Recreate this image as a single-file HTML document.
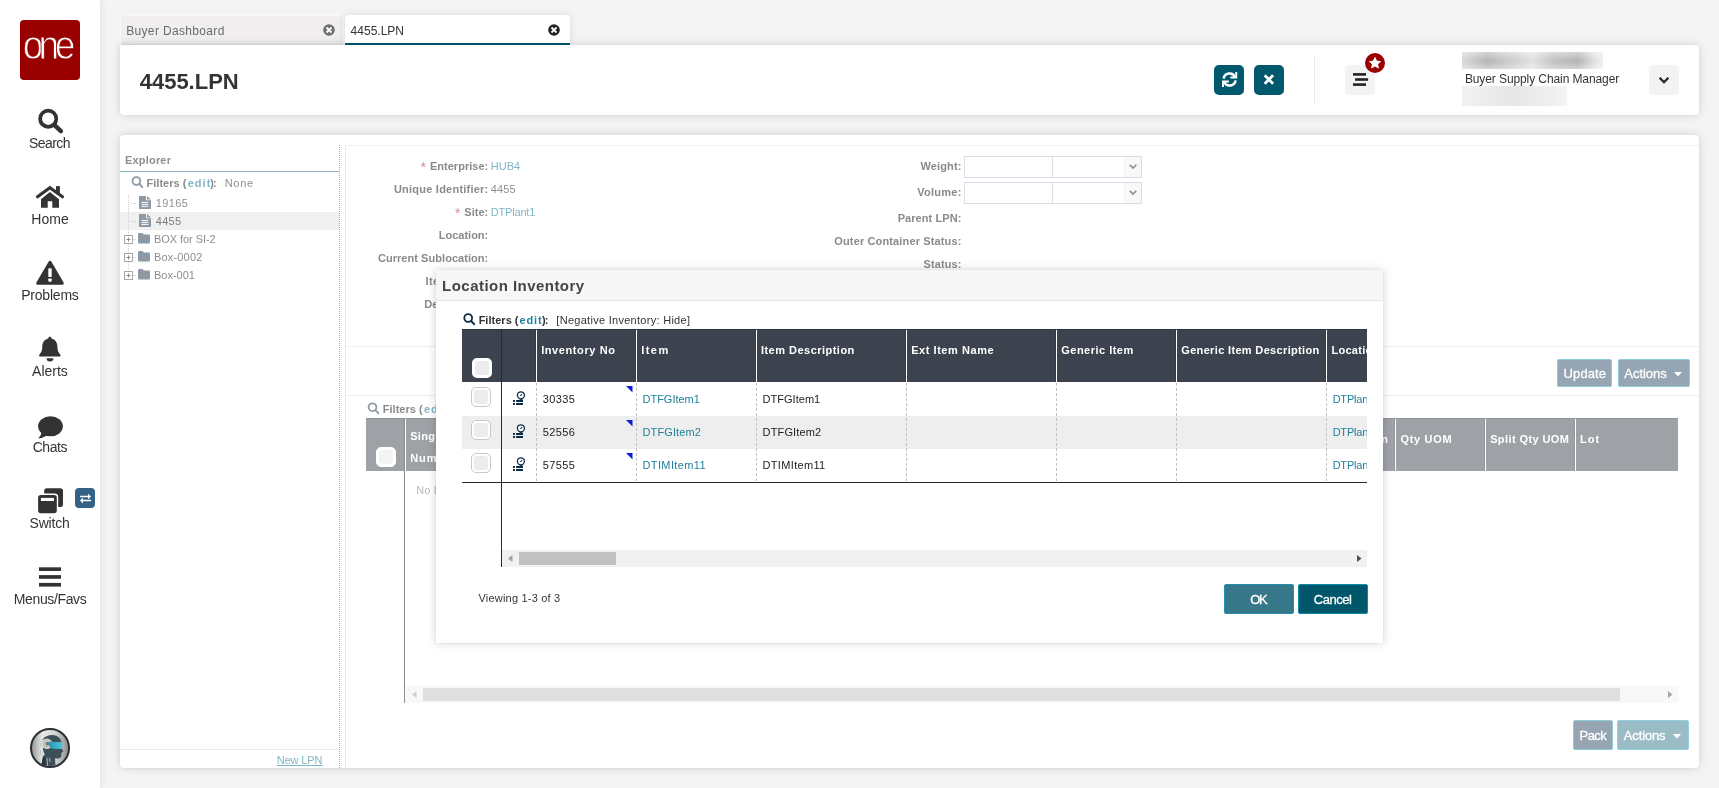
<!DOCTYPE html>
<html lang="en">
<head>
<meta charset="utf-8">
<title>4455.LPN</title>
<style>
*{box-sizing:border-box;margin:0;padding:0}
html,body{width:1719px;height:788px;overflow:hidden}
body{background:#f4f4f4;font-family:"Liberation Sans",sans-serif;font-size:11px;color:#333;position:relative}
.abs{position:absolute}
.t{position:absolute;white-space:nowrap;line-height:1}
a{text-decoration:none}
svg{position:absolute;overflow:visible}
#side{position:absolute;left:0;top:0;width:100px;height:788px;background:#fff;box-shadow:0 0 8px rgba(40,20,20,.11)}
#logo{position:absolute;left:20px;top:20px;width:60px;height:60px;background:#990000;border-radius:4px}
.panel{position:absolute;background:#fff;box-shadow:0 0 10px rgba(30,10,10,.15),0 0 2px rgba(30,10,10,.06)}
.hbtn{position:absolute;top:65px;width:30px;height:30px;border-radius:5px}
.cb{position:absolute;width:20px;height:20px;border-radius:5px;background:#fff;border:1px solid #c9c9c9}
.cb i{position:absolute;left:2px;top:2px;right:2px;bottom:2px;border-radius:3px;background:#ececec}
.btn{position:absolute;border-radius:2px;border:1px solid}
.vline{position:absolute;width:1px}
.hline{position:absolute;height:1px}
</style>
</head>
<body>
<div id="root" style="position:absolute;left:0;top:0;width:1719px;height:788px;will-change:transform;transform:translateZ(0)">

<!-- ============ SIDEBAR ============ -->
<div id="side">
<div id="logo"><svg style="left:0;top:0" width="60" height="60" viewBox="0 0 60 60"><text transform="scale(.93,1)" x="2.9 19.9 37.4" y="39.4" font-family="Liberation Sans, sans-serif" font-size="40" fill="#fff" stroke="#990000" stroke-width="0.9">one</text></svg></div>
<svg style="left:36px;top:106px" width="30" height="30" viewBox="36 106 30 30"><circle cx="48.2" cy="118.7" r="8.1" fill="none" stroke="#333" stroke-width="3.75"/><path d="M54.8 125.3 L60.9 131.2" stroke="#333" stroke-width="4.4" stroke-linecap="round"/></svg>
<svg style="left:34px;top:184px" width="32" height="26" viewBox="34 184 32 26"><path d="M37.500 196.800 L49.900 187.700 L62.500 196.800" fill="none" stroke="#333" stroke-width="3.100" stroke-linecap="round" stroke-linejoin="miter"/><rect x="56" y="186.100" width="3.900" height="8" fill="#333"/><path d="M41 199.200 L49.900 191.900 L59 199.200 V207.800 H52.300 V201.300 H47.700 V207.800 H41 Z" fill="#333"/></svg>
<svg style="left:34px;top:258px" width="32" height="30" viewBox="34 258 32 30"><path d="M50 262.2 L62.3 283.3 H37.7 Z" fill="#333" stroke="#333" stroke-width="3" stroke-linejoin="round"/><rect x="48.3" y="268.2" width="3.4" height="8.8" rx="0.8" fill="#fff"/><rect x="48.3" y="278.4" width="3.4" height="3.3" rx="0.9" fill="#fff"/></svg>
<svg style="left:36px;top:334px" width="28" height="30" viewBox="36 334 28 30"><path d="M50 336.800 c.8 0 1.400 .6 1.400 1.400 v.2 c3.7 .8 6 4 6 7.900 c0 4.600 1.300 6.600 2.800 8.100 c.9 .9 .3 2.200 -.9 2.200 H40.400 c-1.200 0 -1.800 -1.300 -.9 -2.200 c1.500 -1.500 2.800 -3.500 2.800 -8.100 c0 -3.900 2.300 -7.100 6 -7.900 v-.2 c0 -.8 .6 -1.400 1.400 -1.400 z" fill="#333"/><path d="M46.600 358.300 h6.800 a3.400 3.300 0 0 1 -6.800 0 z" fill="#333"/></svg>
<svg style="left:36px;top:414px" width="30" height="28" viewBox="36 414 30 28"><ellipse cx="50.500" cy="426.300" rx="12.400" ry="10.050" fill="#333"/><path d="M41.5 431.5 c0 3 -1.500 5.300 -3.500 6.800 c3.600 .3 6.800 -1 9 -3.200 z" fill="#333"/></svg>
<svg style="left:36px;top:486px" width="30" height="30" viewBox="36 486 30 30"><rect x="44.200" y="488.300" width="18.800" height="18.800" rx="2.800" fill="#333"/><rect x="36.700" y="493.600" width="21.500" height="21" rx="3.600" fill="#fff"/><rect x="38.100" y="495" width="18.700" height="18.300" rx="2.700" fill="#333"/><rect x="40.900" y="497.900" width="13" height="3.100" fill="#fff"/></svg>
<div class="abs" style="left:75px;top:488px;width:20px;height:20px;border-radius:4px;background:#356185"><svg style="left:0;top:0" width="20" height="20" viewBox="0 0 20 20"><path d="M5.100 7.750 H13 V5.700 L16 8.500 L13 11.300 V9.250 H5.100 Z M16 11.850 H8 V9.800 L5 12.600 L8 15.400 V13.350 H16 Z" fill="#fff"/></svg></div>
<svg style="left:36px;top:564px" width="28" height="26" viewBox="36 564 28 26"><rect x="39" y="567.300" width="22" height="3.700" fill="#333"/><rect x="39" y="575.100" width="22" height="3.700" fill="#333"/><rect x="39" y="582.900" width="22" height="3.700" fill="#333"/></svg>
<span class="t" style="left:28.96px;top:136px;font-size:14px;color:#333;letter-spacing:-0.553px;">Search</span>
<span class="t" style="left:31.16px;top:212px;font-size:14px;color:#333;letter-spacing:0.117px;">Home</span>
<span class="t" style="left:21.16px;top:288px;font-size:14px;color:#333;letter-spacing:-0.204px;">Problems</span>
<span class="t" style="left:32.06px;top:364px;font-size:14px;color:#333;">Alerts</span>
<span class="t" style="left:32.66px;top:440px;font-size:14px;color:#333;letter-spacing:-0.446px;">Chats</span>
<span class="t" style="left:29.56px;top:516px;font-size:14px;color:#333;letter-spacing:-0.191px;">Switch</span>
<span class="t" style="left:13.76px;top:592px;font-size:14px;color:#333;letter-spacing:-0.360px;">Menus/Favs</span>
<svg style="left:29px;top:727px" width="42" height="42" viewBox="0 0 42 42">
<defs><linearGradient id="avg" x1="0" y1="0" x2="1" y2="0"><stop offset="0" stop-color="#8f8f8f"/><stop offset=".3" stop-color="#e9e9e9"/><stop offset=".65" stop-color="#d4d4d4"/><stop offset="1" stop-color="#8a8a8a"/></linearGradient>
<linearGradient id="avv" x1="0" y1="0" x2="1" y2="0"><stop offset="0" stop-color="#2596b4"/><stop offset="1" stop-color="#4fc3d8"/></linearGradient>
<clipPath id="avc"><circle cx="21" cy="21" r="18"/></clipPath></defs>
<circle cx="21" cy="21" r="19" fill="url(#avg)" stroke="#2b3033" stroke-width="2"/>
<g clip-path="url(#avc)">
<path d="M12.300 39 L14 29.500 C10.500 26.500 9.800 18 13.500 12.500 C17 7.300 26.500 6.300 30.500 11 C33 14 33.200 18 32.800 21.500 L34.300 24.600 L32.600 25.600 L32.200 29.500 C31 31.600 28.500 32 26 31.200 L26.600 40 C22 41 16.500 41 12.300 39 Z" fill="#3d5059"/>
<path d="M13.500 12.500 C9.800 18 10.500 26.500 14 29.500 L15.800 27.400 C13.200 23.400 13.200 17 16 13 Z" fill="#dde3e5"/>
<path d="M14 29.500 L12.300 39 L17 40.300 L16.400 29.800 Z" fill="#27353d"/>
<path d="M17.800 30.500 L18.800 40 M20.600 30.800 L20.900 35" stroke="#c9d1d4" stroke-width=".8"/>
<circle cx="17.900" cy="16.800" r="5.300" fill="#d3dadd"/>
<circle cx="17.900" cy="16.800" r="3.500" fill="none" stroke="#c0a05a" stroke-width=".8"/>
<circle cx="18.300" cy="16.800" r="2" fill="#6d7f86"/>
<path d="M19.600 14.700 L32.800 15 C33.700 17 33.700 20 32.800 22.100 L23.400 21.700 C20.800 20.700 19.300 18 19.600 14.700 Z" fill="url(#avv)"/>
</g>
</svg>
</div>

<!-- ============ TABS + HEADER ============ -->
<div class="abs" style="left:120px;top:15px;width:224px;height:30px;background:#f0eeee;border-radius:4px 4px 0 0;border:1px solid #f9f9f9;border-bottom:0;box-shadow:inset 0 -4px 4px -3px rgba(40,20,20,.09)"></div>
<div class="abs" style="left:345px;top:15px;width:225px;height:30px;background:#fff;border-radius:4px 4px 0 0;border-bottom:2px solid #005068;z-index:2;box-shadow:0 0 8px rgba(30,10,10,.11);clip-path:inset(-10px -10px 0 -10px)"></div>
<div class="panel" style="left:120px;top:45px;width:1579px;height:70px;border-radius:0 4px 4px 4px"></div>
<span class="t" style="left:126.18px;top:25px;font-size:12px;color:#6b6b6b;letter-spacing:0.340px;z-index:3;">Buyer Dashboard</span>
<span class="t" style="left:350.58px;top:25px;font-size:12px;color:#333;letter-spacing:0.012px;z-index:3;">4455.LPN</span>
<svg style="left:321.8px;top:23px;z-index:3" width="14" height="14" viewBox="-7 -7 14 14"><circle r="5.800" fill="#6e6e6e"/><path d="M-2.500 -2.500 L2.500 2.500 M2.500 -2.500 L-2.500 2.500" stroke="#fff" stroke-width="1.800" stroke-linecap="butt"/></svg>
<svg style="left:546.8px;top:23px;z-index:3" width="14" height="14" viewBox="-7 -7 14 14"><circle r="5.800" fill="#222"/><path d="M-2.500 -2.500 L2.500 2.500 M2.500 -2.500 L-2.500 2.500" stroke="#fff" stroke-width="1.800" stroke-linecap="butt"/></svg>
<span class="t" style="left:139.68px;top:71px;font-size:22px;color:#333;font-weight:bold;">4455.LPN</span>
<div class="hbtn" style="left:1214px;background:#00586d"><svg style="left:0;top:0" width="30" height="30" viewBox="0 0 30 30"><g fill="none" stroke="#fff" stroke-width="2.500"><path d="M9.610 13.660 A6.050 6.050 0 0 1 20.990 11.750"/><path d="M21.590 15.340 A6.050 6.050 0 0 1 10.210 17.250"/></g><path d="M22.250 6.900 V12.550 H16.300 M8.950 22.100 V16.450 H14.900" fill="none" stroke="#fff" stroke-width="1.900"/></svg></div>
<div class="hbtn" style="left:1254px;background:#00586d"><svg style="left:0;top:0" width="30" height="30" viewBox="0 0 30 30"><path d="M10.700 10.300 L19.100 18.700 M19.100 10.300 L10.700 18.700" stroke="#fff" stroke-width="2.700" stroke-linecap="butt"/></svg></div>
<div class="vline" style="left:1314px;top:55px;height:50px;background:#ececec"></div>
<div class="hbtn" style="left:1345px;background:#f3f3f3"><svg style="left:0;top:0" width="30" height="30" viewBox="0 0 30 30"><rect x="8" y="8.100" width="13" height="2.600" fill="#222"/><rect x="10.100" y="13.200" width="13" height="2.600" fill="#222"/><rect x="8" y="18.300" width="13" height="2.600" fill="#222"/></svg></div>
<svg style="left:1364px;top:52px" width="22" height="22" viewBox="-11 -11 22 22"><circle r="10" fill="#990000"/><path d="M0 -5.600 L1.650 -1.900 L5.600 -1.500 L2.650 1.150 L3.450 5.100 L0 3.100 L-3.450 5.100 L-2.650 1.150 L-5.600 -1.500 L-1.650 -1.900 Z" fill="#fff" stroke="#fff" stroke-width=".8" stroke-linejoin="round"/></svg>
<div class="abs" style="left:1462px;top:52px;width:141px;height:17px;background:linear-gradient(90deg,#d9d9d9 0%,#b9b9b9 18%,#cfcfcf 35%,#e2e2e2 50%,#c4c4c4 65%,#b7b7b7 82%,#e9e9e9 96%,#eee 100%);filter:blur(.6px)"></div>
<div class="abs" style="left:1461px;top:51px;width:143px;height:19px;background:linear-gradient(180deg,rgba(255,255,255,.45),rgba(255,255,255,0) 45%,rgba(255,255,255,0) 60%,rgba(255,255,255,.4))"></div>
<div class="abs" style="left:1462px;top:86px;width:105px;height:20px;background:linear-gradient(90deg,#f1f1f1,#e6e6e6 50%,#efefef 85%,#f5f5f5)"></div>
<div class="hbtn" style="left:1649px;background:#f3f3f3"><svg style="left:0;top:0" width="30" height="30" viewBox="0 0 30 30"><path d="M10.600 12.800 L15 17.200 L19.400 12.800" fill="none" stroke="#222" stroke-width="2.300"/></svg></div>
<span class="t" style="left:1464.88px;top:73px;font-size:12px;color:#333;letter-spacing:-0.096px;">Buyer Supply Chain Manager</span>

<!-- ============ MAIN PANEL (masked by modal overlay) ============ -->
<div class="panel" style="left:120px;top:135px;width:1579px;height:633px;border-radius:4px"></div>
<span class="t" style="left:125.04px;top:155px;font-size:11px;color:#8f8f8f;font-weight:bold;letter-spacing:0.181px;">Explorer</span>
<div class="hline" style="left:120px;top:171px;width:219px;background:#8ab6c4"></div>
<svg style="left:130px;top:176px" width="14" height="14" viewBox="130 176 14 14"><circle cx="136.400" cy="181" r="3.900" fill="none" stroke="#8e99a6" stroke-width="1.800"/><path d="M139.400 184 L142.300 187.200" stroke="#8e99a6" stroke-width="1.9" stroke-linecap="round"/></svg>
<span class="t" style="left:146.54px;top:178px;font-size:11px;color:#8a8a8a;font-weight:bold;letter-spacing:0.021px;">Filters (</span>
<span class="t" style="left:187.74px;top:178px;font-size:11px;color:#80b6c6;font-weight:bold;letter-spacing:1.019px;">edit</span>
<span class="t" style="left:210.34px;top:178px;font-size:11px;color:#8a8a8a;font-weight:bold;letter-spacing:-0.992px;">):</span>
<span class="t" style="left:224.74px;top:178px;font-size:11px;color:#8e8e8e;letter-spacing:0.669px;">None</span>
<div class="abs" style="left:120px;top:212px;width:219px;height:18px;background:#f0f0f0"></div>
<div class="vline" style="left:128px;top:195px;height:78px;border-left:1px dotted #d0d0d0"></div>
<div class="hline" style="left:131px;top:203px;width:5px;border-top:1px dotted #d0d0d0"></div>
<div class="hline" style="left:131px;top:221px;width:5px;border-top:1px dotted #d0d0d0"></div>
<svg style="left:139px;top:196px" width="12" height="13" viewBox="0 0 12 13"><path d="M0 0 H7 V4.200 H12 V13 H0 Z M8 0 L12 3.400 H8 Z" fill="#8e99a6"/><path d="M2.500 6.400 H9.300 M2.500 8.400 H9.300 M2.500 10.400 H9.300" stroke="#fff" stroke-width="1"/></svg>
<span class="t" style="left:155.74px;top:198px;font-size:11px;color:#8e8e8e;letter-spacing:0.374px;">19165</span>
<svg style="left:139px;top:214px" width="12" height="13" viewBox="0 0 12 13"><path d="M0 0 H7 V4.200 H12 V13 H0 Z M8 0 L12 3.400 H8 Z" fill="#8e99a6"/><path d="M2.500 6.400 H9.300 M2.500 8.400 H9.300 M2.500 10.400 H9.300" stroke="#fff" stroke-width="1"/></svg>
<span class="t" style="left:155.74px;top:216px;font-size:11px;color:#7d7d7d;letter-spacing:0.273px;">4455</span>
<svg style="left:124px;top:235.1px" width="9" height="9" viewBox="0 0 9 9"><rect x=".5" y=".5" width="8" height="8" fill="#fff" stroke="#a8a8a8"/><path d="M2.500 4.500 H6.500 M4.500 2.500 V6.500" stroke="#8a8a8a" stroke-width="1"/></svg>
<svg style="left:138px;top:233.39999999999998px" width="12" height="10.500" viewBox="0 0 12 10.500"><path d="M1.200 0 H4.600 L5.800 1.400 H10.800 A1.200 1.200 0 0 1 12 2.600 V9.300 A1.200 1.200 0 0 1 10.800 10.500 H1.200 A1.200 1.200 0 0 1 0 9.300 V1.200 A1.200 1.200 0 0 1 1.200 0 Z" fill="#8e99a6"/></svg>
<span class="t" style="left:153.94px;top:234px;font-size:11px;color:#8e8e8e;letter-spacing:-0.053px;">BOX for SI-2</span>
<div class="hline" style="left:133px;top:239.2px;width:3px;border-top:1px dotted #d0d0d0"></div>
<svg style="left:124px;top:253.1px" width="9" height="9" viewBox="0 0 9 9"><rect x=".5" y=".5" width="8" height="8" fill="#fff" stroke="#a8a8a8"/><path d="M2.500 4.500 H6.500 M4.500 2.500 V6.500" stroke="#8a8a8a" stroke-width="1"/></svg>
<svg style="left:138px;top:251.39999999999998px" width="12" height="10.500" viewBox="0 0 12 10.500"><path d="M1.200 0 H4.600 L5.800 1.400 H10.800 A1.200 1.200 0 0 1 12 2.600 V9.300 A1.200 1.200 0 0 1 10.800 10.500 H1.200 A1.200 1.200 0 0 1 0 9.300 V1.200 A1.200 1.200 0 0 1 1.200 0 Z" fill="#8e99a6"/></svg>
<span class="t" style="left:153.94px;top:252px;font-size:11px;color:#8e8e8e;letter-spacing:0.185px;">Box-0002</span>
<div class="hline" style="left:133px;top:257.2px;width:3px;border-top:1px dotted #d0d0d0"></div>
<svg style="left:124px;top:271.09999999999997px" width="9" height="9" viewBox="0 0 9 9"><rect x=".5" y=".5" width="8" height="8" fill="#fff" stroke="#a8a8a8"/><path d="M2.500 4.500 H6.500 M4.500 2.500 V6.500" stroke="#8a8a8a" stroke-width="1"/></svg>
<svg style="left:138px;top:269.4px" width="12" height="10.500" viewBox="0 0 12 10.500"><path d="M1.200 0 H4.600 L5.800 1.400 H10.800 A1.200 1.200 0 0 1 12 2.600 V9.300 A1.200 1.200 0 0 1 10.800 10.500 H1.200 A1.200 1.200 0 0 1 0 9.300 V1.200 A1.200 1.200 0 0 1 1.200 0 Z" fill="#8e99a6"/></svg>
<span class="t" style="left:153.94px;top:270px;font-size:11px;color:#8e8e8e;">Box-001</span>
<div class="hline" style="left:133px;top:275.2px;width:3px;border-top:1px dotted #d0d0d0"></div>
<div class="hline" style="left:120px;top:749px;width:219px;background:#e9e9e9"></div>
<a class="t" style="left:276.84px;top:755px;font-size:11px;color:#80b6c6;letter-spacing:-0.141px;text-decoration:underline;">New LPN</a>
<div class="vline" style="left:339px;top:145px;height:623px;border-left:1px dotted #a8a8a8"></div>
<div class="vline" style="left:345px;top:145px;height:623px;background:#ebebeb"></div>
<div class="hline" style="left:345px;top:145px;width:1354px;background:#f0f0f0"></div>
<div class="hline" style="left:346px;top:346px;width:1353px;background:#eeeeee"></div>
<div class="hline" style="left:346px;top:395px;width:1353px;background:#eeeeee"></div>
<span class="t" style="left:429.94px;top:161px;font-size:11px;color:#8a8a8a;font-weight:bold;letter-spacing:0.023px;">Enterprise:</span>
<span class="t" style="left:420.56px;top:160px;font-size:14px;color:#d98a8e;">*</span>
<span class="t" style="left:490.84px;top:161px;font-size:11px;color:#80b6c6;letter-spacing:-0.008px;">HUB4</span>
<span class="t" style="left:393.94px;top:184px;font-size:11px;color:#8a8a8a;font-weight:bold;letter-spacing:0.227px;">Unique Identifier:</span>
<span class="t" style="left:490.84px;top:184px;font-size:11px;color:#8e8e8e;letter-spacing:0.107px;">4455</span>
<span class="t" style="left:464.34px;top:207px;font-size:11px;color:#8a8a8a;font-weight:bold;letter-spacing:0.019px;">Site:</span>
<span class="t" style="left:454.96px;top:206px;font-size:14px;color:#d98a8e;">*</span>
<span class="t" style="left:490.84px;top:207px;font-size:11px;color:#80b6c6;letter-spacing:-0.194px;">DTPlant1</span>
<span class="t" style="left:438.84px;top:230px;font-size:11px;color:#8a8a8a;font-weight:bold;letter-spacing:-0.010px;">Location:</span>
<span class="t" style="left:377.94px;top:253px;font-size:11px;color:#8a8a8a;font-weight:bold;letter-spacing:0.048px;">Current Sublocation:</span>
<span class="t" style="left:425.44px;top:276px;font-size:11px;color:#8a8a8a;font-weight:bold;letter-spacing:0.390px;">Item Name:</span>
<span class="t" style="left:424.34px;top:299px;font-size:11px;color:#8a8a8a;font-weight:bold;letter-spacing:-0.024px;">Description:</span>
<span class="t" style="left:920.54px;top:161px;font-size:11px;color:#8a8a8a;font-weight:bold;letter-spacing:0.118px;">Weight:</span>
<span class="t" style="left:917.24px;top:187px;font-size:11px;color:#8a8a8a;font-weight:bold;letter-spacing:0.254px;">Volume:</span>
<span class="t" style="left:897.64px;top:213px;font-size:11px;color:#8a8a8a;font-weight:bold;letter-spacing:0.075px;">Parent LPN:</span>
<span class="t" style="left:834.34px;top:236px;font-size:11px;color:#8a8a8a;font-weight:bold;letter-spacing:0.133px;">Outer Container Status:</span>
<span class="t" style="left:923.54px;top:259px;font-size:11px;color:#8a8a8a;font-weight:bold;letter-spacing:0.090px;">Status:</span>
<div class="abs" style="left:964px;top:156px;width:89px;height:22px;border:1px solid #dcdce6;background:#fff"></div>
<div class="abs" style="left:1052px;top:156px;width:90px;height:22px;border:1px solid #dcdce6;background:#fff"></div>
<div class="abs" style="left:1124px;top:156px;width:18px;height:22px;border:1px solid #dcdce6;border-left-color:#f3f3f6;background:#f8f8f8"><svg style="left:0;top:0" width="16" height="20" viewBox="0 0 16 20"><path d="M4.700 7.800 L8 11.100 L11.300 7.800" fill="none" stroke="#8c8c8c" stroke-width="1.600"/></svg></div>
<div class="abs" style="left:964px;top:182px;width:89px;height:22px;border:1px solid #dcdce6;background:#fff"></div>
<div class="abs" style="left:1052px;top:182px;width:90px;height:22px;border:1px solid #dcdce6;background:#fff"></div>
<div class="abs" style="left:1124px;top:182px;width:18px;height:22px;border:1px solid #dcdce6;border-left-color:#f3f3f6;background:#f8f8f8"><svg style="left:0;top:0" width="16" height="20" viewBox="0 0 16 20"><path d="M4.700 7.800 L8 11.100 L11.300 7.800" fill="none" stroke="#8c8c8c" stroke-width="1.600"/></svg></div>
<div class="btn" style="left:1557px;top:359px;width:55px;height:28px;background:#95a5b3;border-color:#8ecbdb"></div>
<span class="t" style="left:1563.62px;top:367px;font-size:13px;color:#fff;letter-spacing:0.084px;-webkit-text-stroke:.3px #fff;">Update</span>
<div class="btn" style="left:1618px;top:359px;width:72px;height:28px;background:#95a5b3;border-color:#8ecbdb"></div>
<span class="t" style="left:1624.32px;top:367px;font-size:13px;color:#fff;letter-spacing:-0.030px;-webkit-text-stroke:.3px #fff;">Actions</span>
<svg style="left:1673.8px;top:372.3px" width="8" height="4.500" viewBox="0 0 8 4.500"><path d="M0 0 H8 L4 4.500 Z" fill="#fff"/></svg>
<div class="btn" style="left:1573px;top:720px;width:40px;height:30px;background:#97a5b3;border-color:#8ecbdb"></div>
<span class="t" style="left:1579.62px;top:729px;font-size:13px;color:#fff;letter-spacing:-0.582px;-webkit-text-stroke:.3px #fff;">Pack</span>
<div class="btn" style="left:1617px;top:720px;width:72px;height:30px;background:#9bbcc5;border-color:#8ed2e0"></div>
<span class="t" style="left:1623.82px;top:729px;font-size:13px;color:#fff;letter-spacing:-0.147px;-webkit-text-stroke:.3px #fff;">Actions</span>
<svg style="left:1673.0px;top:734.0px" width="8" height="4.500" viewBox="0 0 8 4.500"><path d="M0 0 H8 L4 4.500 Z" fill="#fff"/></svg>
<svg style="left:366px;top:402px" width="14" height="14" viewBox="366 402 14 14"><circle cx="372.500" cy="407.200" r="3.900" fill="none" stroke="#8e99a6" stroke-width="1.800"/><path d="M375.500 410.200 L378.400 413.400" stroke="#8e99a6" stroke-width="1.900" stroke-linecap="round"/></svg>
<span class="t" style="left:382.74px;top:404px;font-size:11px;color:#8a8a8a;font-weight:bold;letter-spacing:0.021px;">Filters (</span>
<span class="t" style="left:423.94px;top:404px;font-size:11px;color:#80b6c6;font-weight:bold;letter-spacing:1.019px;">edit</span>
<div class="abs" style="left:366px;top:418px;width:1312px;height:53px;background:#9ea1a6;border-top:1px solid #92969b"></div>
<div class="vline" style="left:404px;top:418px;height:285px;background:#8d8d8d"></div>
<div class="vline" style="left:405px;top:419px;height:52px;background:#fff"></div>
<div class="vline" style="left:1395px;top:419px;height:52px;background:#fff"></div>
<div class="vline" style="left:1394px;top:419px;height:52px;background:#92969b"></div>
<div class="vline" style="left:1485px;top:419px;height:52px;background:#fff"></div>
<div class="vline" style="left:1484px;top:419px;height:52px;background:#92969b"></div>
<div class="vline" style="left:1575px;top:419px;height:52px;background:#fff"></div>
<div class="vline" style="left:1574px;top:419px;height:52px;background:#92969b"></div>
<div class="cb" style="left:376px;top:447px;border-color:#fff;background:#fff"><i style="background:#f4f4f4"></i></div>
<span class="t" style="left:410.14px;top:431px;font-size:11px;color:#fff;font-weight:bold;letter-spacing:0.358px;">Single</span>
<span class="t" style="left:410.14px;top:453px;font-size:11px;color:#fff;font-weight:bold;letter-spacing:0.952px;">Number</span>
<span class="t" style="left:1381.34px;top:434px;font-size:11px;color:#fff;font-weight:bold;">n</span>
<span class="t" style="left:1400.44px;top:434px;font-size:11px;color:#fff;font-weight:bold;letter-spacing:0.693px;">Qty UOM</span>
<span class="t" style="left:1490.14px;top:434px;font-size:11px;color:#fff;font-weight:bold;letter-spacing:0.404px;">Split Qty UOM</span>
<span class="t" style="left:1580.04px;top:434px;font-size:11px;color:#fff;font-weight:bold;letter-spacing:1.013px;">Lot</span>
<span class="t" style="left:416.14px;top:485px;font-size:11px;color:#b6bac0;letter-spacing:0.158px;">No Data</span>
<div class="abs" style="left:405px;top:686px;width:1273px;height:17px;background:#f8f8f8"></div>
<div class="abs" style="left:423px;top:688px;width:1197px;height:13px;background:#dfdfdf"></div>
<svg style="left:412px;top:691px" width="4.500" height="7" viewBox="0 0 4.500 7"><path d="M4.500 0 V7 L0 3.500 Z" fill="#d0d0d0"/></svg>
<svg style="left:1667.800px;top:691px" width="4.500" height="7" viewBox="0 0 4.500 7"><path d="M0 0 V7 L4.500 3.500 Z" fill="#a6a6a6"/></svg>

<!-- ============ MODAL: Location Inventory ============ -->
<div class="abs" style="left:436px;top:270px;width:947px;height:373px;background:#fff;box-shadow:0 0 9px rgba(0,0,0,.17),0 0 2px rgba(0,0,0,.08)"></div>
<div class="abs" style="left:436px;top:270px;width:947px;height:31px;background:#f7f7f7;border-bottom:1px solid #e4e4e4"></div>
<span class="t" style="left:442.10px;top:278px;font-size:15px;color:#454545;font-weight:bold;letter-spacing:0.460px;">Location Inventory</span>
<svg style="left:462px;top:313px" width="14" height="14" viewBox="462 313 14 14"><circle cx="468.200" cy="318" r="3.900" fill="none" stroke="#0d2a44" stroke-width="1.800"/><path d="M471.200 321 L474.100 324.200" stroke="#0d2a44" stroke-width="2" stroke-linecap="round"/></svg>
<span class="t" style="left:478.64px;top:315px;font-size:11px;color:#333;font-weight:bold;letter-spacing:0.021px;">Filters (</span>
<span class="t" style="left:519.44px;top:315px;font-size:11px;color:#1f819c;font-weight:bold;letter-spacing:0.919px;">edit</span>
<span class="t" style="left:541.94px;top:315px;font-size:11px;color:#333;font-weight:bold;letter-spacing:-0.792px;">):</span>
<span class="t" style="left:556.34px;top:315px;font-size:11px;color:#333;letter-spacing:0.283px;">[Negative Inventory: Hide]</span>
<div class="abs" style="left:462px;top:329px;width:905px;height:53px;background:#3d434e;border-top:1px solid #2f3540"></div>
<div class="vline" style="left:536px;top:330px;height:52px;background:#fff"></div>
<div class="vline" style="left:535px;top:330px;height:52px;background:#343a45"></div>
<div class="vline" style="left:636px;top:330px;height:52px;background:#fff"></div>
<div class="vline" style="left:635px;top:330px;height:52px;background:#343a45"></div>
<div class="vline" style="left:756px;top:330px;height:52px;background:#fff"></div>
<div class="vline" style="left:755px;top:330px;height:52px;background:#343a45"></div>
<div class="vline" style="left:906px;top:330px;height:52px;background:#fff"></div>
<div class="vline" style="left:905px;top:330px;height:52px;background:#343a45"></div>
<div class="vline" style="left:1056px;top:330px;height:52px;background:#fff"></div>
<div class="vline" style="left:1055px;top:330px;height:52px;background:#343a45"></div>
<div class="vline" style="left:1176px;top:330px;height:52px;background:#fff"></div>
<div class="vline" style="left:1175px;top:330px;height:52px;background:#343a45"></div>
<div class="vline" style="left:1326px;top:330px;height:52px;background:#fff"></div>
<div class="vline" style="left:1325px;top:330px;height:52px;background:#343a45"></div>
<span class="t" style="left:541.14px;top:345px;font-size:11px;color:#fff;font-weight:bold;letter-spacing:0.597px;">Inventory No</span>
<span class="t" style="left:641.14px;top:345px;font-size:11px;color:#fff;font-weight:bold;letter-spacing:1.498px;">Item</span>
<span class="t" style="left:760.94px;top:345px;font-size:11px;color:#fff;font-weight:bold;letter-spacing:0.480px;">Item Description</span>
<span class="t" style="left:911.14px;top:345px;font-size:11px;color:#fff;font-weight:bold;letter-spacing:0.556px;">Ext Item Name</span>
<span class="t" style="left:1061.24px;top:345px;font-size:11px;color:#fff;font-weight:bold;letter-spacing:0.485px;">Generic Item</span>
<span class="t" style="left:1181.24px;top:345px;font-size:11px;color:#fff;font-weight:bold;letter-spacing:0.341px;">Generic Item Description</span>
<div class="abs" style="left:1327px;top:340px;width:40px;height:20px;overflow:hidden"><span class="t" style="left:4.44px;top:5px;font-size:11px;color:#fff;font-weight:bold;letter-spacing:0.282px;">Location</span>
</div>
<div class="cb" style="left:472px;top:358px;border:2px solid #fff;background:#fff"><i style="left:1px;top:1px;right:1px;bottom:1px;background:#ededed"></i></div>
<div class="abs" style="left:462px;top:416px;width:905px;height:33px;background:#eeeeee"></div>
<div class="cb" style="left:471px;top:387px"><i></i></div>
<svg style="left:512px;top:390px" width="14" height="16" viewBox="0 0 14 16"><circle cx="8.900" cy="5.300" r="3.500" fill="#fff" stroke="#0d2a44" stroke-width="1.300"/><path d="M8.400 6 L10 4" stroke="#0d2a44" stroke-width="1.100"/><path d="M7.800 9.300 L10.300 8.900 L10.500 10.200 H7.800 Z" fill="#0d2a44"/><path d="M1 11 H2.900 M4.100 11 H11 M1 14 H2.900 M4.100 14 H11" stroke="#0d2a44" stroke-width="1.800"/></svg>
<span class="t" style="left:542.74px;top:394px;font-size:11px;color:#222;letter-spacing:0.374px;">30335</span>
<svg style="left:626px;top:386.2px" width="6.500" height="6.500" viewBox="0 0 6.500 6.500"><path d="M0 0 H6.500 V6.500 Z" fill="#0a1fd6"/></svg>
<a class="t" style="left:642.54px;top:394px;font-size:11px;color:#1f819c;letter-spacing:-0.019px;">DTFGItem1</a>
<span class="t" style="left:762.54px;top:394px;font-size:11px;color:#222;letter-spacing:0.031px;">DTFGItem1</span>
<div class="abs" style="left:1327px;top:390px;width:40px;height:20px;overflow:hidden"><a class="t" style="left:5.64px;top:4px;font-size:11px;color:#1f819c;letter-spacing:-0.194px;">DTPlant1</a>
</div>
<div class="cb" style="left:471px;top:420px"><i></i></div>
<svg style="left:512px;top:423px" width="14" height="16" viewBox="0 0 14 16"><circle cx="8.900" cy="5.300" r="3.500" fill="#fff" stroke="#0d2a44" stroke-width="1.300"/><path d="M8.400 6 L10 4" stroke="#0d2a44" stroke-width="1.100"/><path d="M7.800 9.300 L10.300 8.900 L10.500 10.200 H7.800 Z" fill="#0d2a44"/><path d="M1 11 H2.900 M4.100 11 H11 M1 14 H2.900 M4.100 14 H11" stroke="#0d2a44" stroke-width="1.800"/></svg>
<span class="t" style="left:542.74px;top:427px;font-size:11px;color:#222;letter-spacing:0.374px;">52556</span>
<svg style="left:626px;top:420.2px" width="6.500" height="6.500" viewBox="0 0 6.500 6.500"><path d="M0 0 H6.500 V6.500 Z" fill="#0a1fd6"/></svg>
<a class="t" style="left:642.54px;top:427px;font-size:11px;color:#1f819c;letter-spacing:0.106px;">DTFGItem2</a>
<span class="t" style="left:762.54px;top:427px;font-size:11px;color:#222;letter-spacing:0.156px;">DTFGItem2</span>
<div class="abs" style="left:1327px;top:423px;width:40px;height:20px;overflow:hidden"><a class="t" style="left:5.64px;top:4px;font-size:11px;color:#1f819c;letter-spacing:-0.194px;">DTPlant1</a>
</div>
<div class="cb" style="left:471px;top:453px"><i></i></div>
<svg style="left:512px;top:456px" width="14" height="16" viewBox="0 0 14 16"><circle cx="8.900" cy="5.300" r="3.500" fill="#fff" stroke="#0d2a44" stroke-width="1.300"/><path d="M8.400 6 L10 4" stroke="#0d2a44" stroke-width="1.100"/><path d="M7.800 9.300 L10.300 8.900 L10.500 10.200 H7.800 Z" fill="#0d2a44"/><path d="M1 11 H2.900 M4.100 11 H11 M1 14 H2.900 M4.100 14 H11" stroke="#0d2a44" stroke-width="1.800"/></svg>
<span class="t" style="left:542.74px;top:460px;font-size:11px;color:#222;letter-spacing:0.374px;">57555</span>
<svg style="left:626px;top:453.2px" width="6.500" height="6.500" viewBox="0 0 6.500 6.500"><path d="M0 0 H6.500 V6.500 Z" fill="#0a1fd6"/></svg>
<a class="t" style="left:642.54px;top:460px;font-size:11px;color:#1f819c;letter-spacing:0.367px;">DTIMItem11</a>
<span class="t" style="left:762.54px;top:460px;font-size:11px;color:#222;letter-spacing:0.333px;">DTIMItem11</span>
<div class="abs" style="left:1327px;top:456px;width:40px;height:20px;overflow:hidden"><a class="t" style="left:5.64px;top:4px;font-size:11px;color:#1f819c;letter-spacing:-0.194px;">DTPlant1</a>
</div>
<div class="vline" style="left:536px;top:383px;height:99px;background:repeating-linear-gradient(180deg,#c2c2c2 0,#c2c2c2 2.700px,transparent 2.700px,transparent 5px)"></div>
<div class="vline" style="left:636px;top:383px;height:99px;background:repeating-linear-gradient(180deg,#c2c2c2 0,#c2c2c2 2.700px,transparent 2.700px,transparent 5px)"></div>
<div class="vline" style="left:756px;top:383px;height:99px;background:repeating-linear-gradient(180deg,#c2c2c2 0,#c2c2c2 2.700px,transparent 2.700px,transparent 5px)"></div>
<div class="vline" style="left:906px;top:383px;height:99px;background:repeating-linear-gradient(180deg,#c2c2c2 0,#c2c2c2 2.700px,transparent 2.700px,transparent 5px)"></div>
<div class="vline" style="left:1056px;top:383px;height:99px;background:repeating-linear-gradient(180deg,#c2c2c2 0,#c2c2c2 2.700px,transparent 2.700px,transparent 5px)"></div>
<div class="vline" style="left:1176px;top:383px;height:99px;background:repeating-linear-gradient(180deg,#c2c2c2 0,#c2c2c2 2.700px,transparent 2.700px,transparent 5px)"></div>
<div class="vline" style="left:1326px;top:383px;height:99px;background:repeating-linear-gradient(180deg,#c2c2c2 0,#c2c2c2 2.700px,transparent 2.700px,transparent 5px)"></div>
<div class="hline" style="left:462px;top:482px;width:905px;background:#2a2a2a"></div>
<div class="vline" style="left:501px;top:329px;height:238px;background:#2a2a2a"></div>
<div class="abs" style="left:502px;top:550px;width:865px;height:17px;background:#f1f1f1"></div>
<div class="abs" style="left:519px;top:552px;width:97px;height:13px;background:#c1c1c1"></div>
<svg style="left:508px;top:555px" width="4.500" height="7" viewBox="0 0 4.500 7"><path d="M4.500 0 V7 L0 3.500 Z" fill="#a3a3a3"/></svg>
<svg style="left:1356.800px;top:555px" width="4.500" height="7" viewBox="0 0 4.500 7"><path d="M0 0 V7 L4.500 3.500 Z" fill="#505050"/></svg>
<span class="t" style="left:478.44px;top:593px;font-size:11px;color:#333;letter-spacing:0.206px;">Viewing 1-3 of 3</span>
<div class="btn" style="left:1224px;top:584px;width:70px;height:30px;background:#367789;border-color:#2290ad"></div>
<div class="btn" style="left:1298px;top:584px;width:70px;height:30px;background:#00566b;border-color:#0c8aa9"></div>
<span class="t" style="left:1250.22px;top:593px;font-size:13px;color:#fff;letter-spacing:-1.221px;-webkit-text-stroke:.3px #fff;">OK</span>
<span class="t" style="left:1313.72px;top:593px;font-size:13px;color:#fff;letter-spacing:-0.465px;-webkit-text-stroke:.3px #fff;">Cancel</span>
</div>
</body>
</html>
